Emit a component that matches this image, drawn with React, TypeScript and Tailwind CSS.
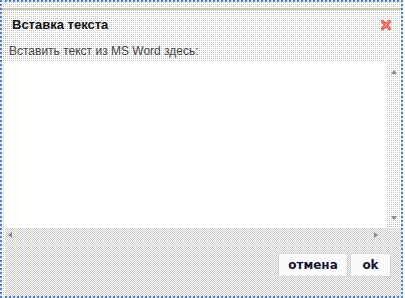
const sparse = "bg-[conic-gradient(#c4c4c4_25%,#ffffff_0)] bg-[length:2px_2px]"
const dense = "bg-[conic-gradient(#c8c8c8_25%,#ffffff_0_50%,#c8c8c8_0_75%,#ffffff_0)] bg-[length:2px_2px]"

function Arrow({ dir }: { dir: "up" | "down" | "left" | "right" }) {
  const pts = {
    up: "1,6 4,2 7,6",
    down: "1,2 7,2 4,6",
    left: "6,1 6,7 2,4",
    right: "2,1 2,7 6,4",
  }[dir]
  return (
    <svg width="8" height="8" viewBox="0 0 8 8">
      <polygon points={pts} fill="#8a8a8a" />
    </svg>
  )
}

export default function App() {
  return (
    <div className="w-[405px] h-[298px] bg-white">
      <div
        className={`w-[403px] h-[298px] border-2 border-dotted border-[#4a7fd2] flex flex-col ${dense}`}
        style={{ fontFamily: '"Liberation Sans", Arial, sans-serif' }}
      >
        {/* Header */}
        <div className={`${sparse} pt-[6px]`}>
          <div className="h-[2px] bg-[#c9c3b3]" />
          <div className="h-[30px] flex items-center justify-between pl-[10px] pr-[9px]">
            <span className="text-[13px] font-bold text-[#111]">Вставка текста</span>
            <svg width="12" height="12" viewBox="0 0 12 12">
              <path d="M2.5 2.5 L9.5 9.5 M9.5 2.5 L2.5 9.5" stroke="#e65a4c" strokeWidth="3.2" strokeLinecap="round" />
              <path d="M2.5 2.5 L9.5 9.5 M9.5 2.5 L2.5 9.5" stroke="#f5a093" strokeWidth="1" strokeLinecap="round" />
            </svg>
          </div>
        </div>

        {/* Body */}
        <div className={`flex-1 flex flex-col pl-[3px] ${sparse}`}>
          <div className="h-[22px] pl-[4px] flex items-center text-[12px] text-[#444]">
            Вставить текст из MS Word здесь:
          </div>
          <div className="flex flex-col">
            <div className="flex h-[166px]">
              <div className="flex-1 bg-white" />
              <div className="w-[15px] flex flex-col items-center justify-between py-[6px]">
                <Arrow dir="up" />
                <Arrow dir="down" />
              </div>
            </div>
            <div className={`flex h-[13px] items-center ${dense}`}>
              <div className="flex-1 flex items-center justify-between pl-[1px] pr-[6px]">
                <Arrow dir="left" />
                <Arrow dir="right" />
              </div>
              <div className="w-[15px]" />
            </div>
          </div>
          <div className={`flex-1 flex justify-end items-start pt-[12px] pr-[10px] gap-[2px] ${dense}`}>
            <button className="w-[70px] h-[24px] bg-[#fafafa] border border-[#d4d4d4] text-[12px] font-bold text-[#141433]" style={{ fontFamily: '"DejaVu Sans", Verdana, sans-serif' }}>
              отмена
            </button>
            <button className="w-[41px] h-[24px] bg-[#fafafa] border border-[#d4d4d4] text-[12px] font-bold text-[#141433]" style={{ fontFamily: '"DejaVu Sans", Verdana, sans-serif' }}>
              ok
            </button>
          </div>
        </div>
      </div>
    </div>
  )
}
